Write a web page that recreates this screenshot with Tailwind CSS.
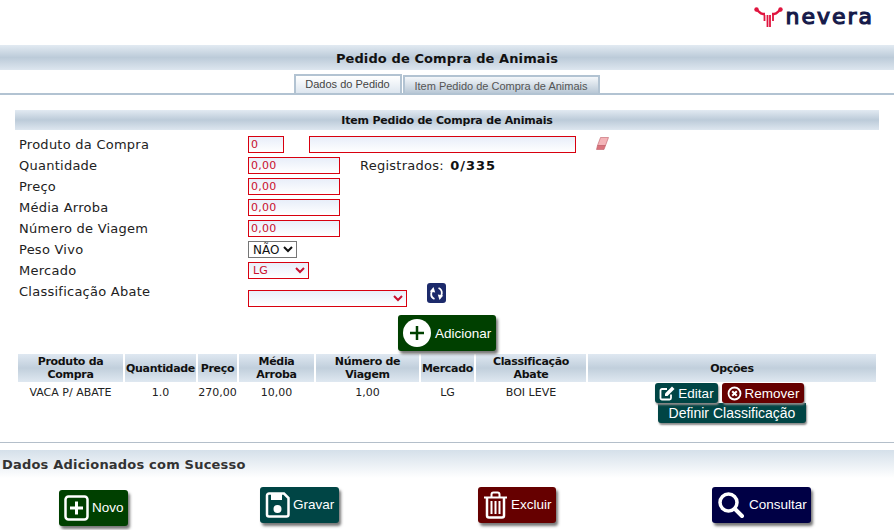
<!DOCTYPE html>
<html lang="pt-BR">
<head>
<meta charset="utf-8">
<title>Pedido de Compra de Animais</title>
<script src="https://cdn.jsdelivr.net/npm/@tailwindcss/browser@4"></script>
</head>
<body class="h-[530px] w-[894px] overflow-hidden bg-white font-['DejaVu_Sans',sans-serif] text-[#111]">

<!-- logo -->
<header class="flex h-[45px] items-start justify-end pt-[7px] pr-[20px]">
  <div class="flex items-center gap-[2px]">
    <svg width="29" height="20" viewBox="0 0 29 20" aria-hidden="true" fill="none" stroke="#e0153f">
      <path stroke-width="2.500" d="M2 3c3 0 3 4 7 4h2M27 3c-3 0-3 4-7 4h-2"/>
      <path stroke-width="1.800" d="M10.500 8v6M13.500 8v12M16 8v12M19 8v6"/>
      <circle cx="2.500" cy="2.500" r="2.200" fill="#e0153f" stroke="none"/>
      <circle cx="26.500" cy="2.500" r="2.200" fill="#e0153f" stroke="none"/>
    </svg>
    <span class="text-[22px] leading-[20px] tracking-[2px] text-[#161a4a] [-webkit-text-stroke:1.200px_#161a4a]">nevera</span>
  </div>
</header>

<!-- page title -->
<h1 class="flex h-[25px] items-center justify-center bg-linear-to-b from-[#e2eaf2] via-[#bccbd9] to-[#dde6ef] pt-[2px] text-[13px] font-bold tracking-[0.1px] text-[#111]">Pedido de Compra de Animais</h1>

<!-- tabs -->
<nav class="flex h-[25px] items-end justify-center border-b-2 border-[#b2c3d2] font-['Liberation_Sans',sans-serif] text-[11px]">
  <a class="mr-[1px] ml-[-1px] flex h-[19px] w-[108px] items-center justify-center border-x-2 border-t-2 border-[#b2c3d2] bg-linear-to-b from-white to-[#dde6ef] text-[#444]">Dados do Pedido</a>
  <a class="flex h-[18px] w-[197px] items-center justify-center border-x-2 border-t-2 border-[#b2c3d2] bg-linear-to-b from-[#f4f7fa] to-[#b9c8d6] pt-[2px] text-[#555]">Item Pedido de Compra de Animais</a>
</nav>

<main class="px-[15px] pt-[15px]">
  <h2 class="flex h-[20px] items-center justify-center bg-linear-to-b from-[#e2eaf2] via-[#bccbd9] to-[#dde6ef] pt-[2px] text-[11px] font-bold tracking-[-0.2px]">Item Pedido de Compra de Animais</h2>

  <!-- form -->
  <form class="pt-[6px] pl-[4px] text-[13px] leading-[17px] tracking-[0.25px] text-[#222]">
    <div class="flex h-[21px] items-start">
      <label class="w-[229px]">Produto da Compra</label>
      <input value="0" class="h-[17px] w-[36px] border border-[#d8000f] bg-linear-to-b from-[#e8eef9] to-white px-[2px] text-[11px] text-[#c8102e]">
      <input class="ml-[25px] h-[17px] w-[267px] border border-[#d8000f] bg-linear-to-b from-[#e8eef9] to-white">
      <svg class="mt-[1px] ml-[20px]" width="13" height="13" viewBox="0 0 13 13" aria-hidden="true">
        <path fill="#f4b4b8" stroke="#c0606a" stroke-width=".6" d="M4.500.5h8L9.500 8.500H1.500z"/>
        <path fill="#d9737c" stroke="#c0606a" stroke-width=".6" d="M1.500 8.500h8l-1.500 4H.5z"/>
      </svg>
    </div>
    <div class="flex h-[21px] items-start">
      <label class="w-[229px]">Quantidade</label>
      <input value="0,00" class="h-[17px] w-[92px] border border-[#d8000f] bg-linear-to-b from-[#e8eef9] to-white px-[2px] text-[11px] text-[#c8102e]">
      <span class="ml-[20px]">Registrados: <b class="ml-[2px] font-bold tracking-[1px] text-[#111]">0/335</b></span>
    </div>
    <div class="flex h-[21px] items-start">
      <label class="w-[229px]">Preço</label>
      <input value="0,00" class="h-[17px] w-[92px] border border-[#d8000f] bg-linear-to-b from-[#e8eef9] to-white px-[2px] text-[11px] text-[#c8102e]">
    </div>
    <div class="flex h-[21px] items-start">
      <label class="w-[229px]">Média Arroba</label>
      <input value="0,00" class="h-[17px] w-[92px] border border-[#d8000f] bg-linear-to-b from-[#e8eef9] to-white px-[2px] text-[11px] text-[#c8102e]">
    </div>
    <div class="flex h-[21px] items-start">
      <label class="w-[229px]">Número de Viagem</label>
      <input value="0,00" class="h-[17px] w-[92px] border border-[#d8000f] bg-linear-to-b from-[#e8eef9] to-white px-[2px] text-[11px] text-[#c8102e]">
    </div>
    <div class="flex h-[21px] items-start">
      <label class="w-[229px]">Peso Vivo</label>
      <select class="h-[17px] w-[49px] border border-[#767676] bg-white text-[12px] tracking-normal text-[#111]"><option>NÃO</option></select>
    </div>
    <div class="flex h-[21px] items-start">
      <label class="w-[229px]">Mercado</label>
      <select class="h-[17px] w-[61px] border border-[#d8000f] bg-linear-to-b from-[#e8eef9] to-white text-[11px] tracking-normal text-[#c8102e]"><option>LG</option></select>
    </div>
    <div class="flex h-[32px] items-start">
      <label class="w-[229px]">Classificação Abate</label>
      <select class="mt-[7px] h-[17px] w-[159px] border border-[#d8000f] bg-linear-to-b from-[#e8eef9] to-white text-[11px] text-[#c8102e]"><option></option></select>
      <span class="ml-[20px] flex h-[20px] w-[19px] items-center justify-center rounded-[3px] bg-[#1c2a6b]">
        <svg width="15" height="15" viewBox="0 0 15 15" fill="none" stroke="white" stroke-width="1.800" aria-hidden="true">
          <path d="M5.500 13C3 12 2 10 2.200 7.500 2.300 6.500 2.800 5.500 3.500 4.500"/>
          <path fill="white" stroke="none" d="M.8 5.500L4.500 1l1.700 5.500z"/>
          <path d="M9.500 2c2.500 1 3.500 3 3.300 5.500-.1 1-.6 2-1.300 3"/>
          <path fill="white" stroke="none" d="M14.200 9.500L10.500 14 8.800 8.500z"/>
        </svg>
      </span>
    </div>
    <div class="flex h-[39px] items-start pl-[379px]">
      <button type="button" class="flex h-[36px] w-[98px] items-center rounded-[3px] bg-[#004000] pl-[5px] font-['Liberation_Sans',sans-serif] text-[13.500px] tracking-normal text-white shadow-[2px_3px_3px_#777]">
        <svg width="28" height="28" viewBox="0 0 28 28" aria-hidden="true">
          <circle cx="14" cy="14" r="14" fill="white"/>
          <path stroke="#004000" stroke-width="2.500" d="M14 7v14M7 14h14"/>
        </svg>
        <span class="ml-[4px]">Adicionar</span>
      </button>
    </div>
  </form>

  <!-- items -->
  <table class="ml-[1px] w-[862px] table-fixed border-separate border-spacing-x-[2px] border-spacing-y-0 text-[11px] leading-[13px] text-[#222]">
    <colgroup>
      <col class="w-[105px]"><col class="w-[71px]"><col class="w-[39px]"><col class="w-[75px]"><col class="w-[103px]"><col class="w-[53px]"><col class="w-[110px]"><col>
    </colgroup>
    <thead>
      <tr class="h-[28px] tracking-[-0.3px] text-[#111]">
        <th class="bg-linear-to-b from-[#dfe8f1] via-[#c1cfdc] to-[#dfe8f1] font-bold">Produto da Compra</th>
        <th class="bg-linear-to-b from-[#dfe8f1] via-[#c1cfdc] to-[#dfe8f1] font-bold">Quantidade</th>
        <th class="bg-linear-to-b from-[#dfe8f1] via-[#c1cfdc] to-[#dfe8f1] font-bold">Preço</th>
        <th class="bg-linear-to-b from-[#dfe8f1] via-[#c1cfdc] to-[#dfe8f1] font-bold">Média Arroba</th>
        <th class="bg-linear-to-b from-[#dfe8f1] via-[#c1cfdc] to-[#dfe8f1] font-bold">Número de Viagem</th>
        <th class="bg-linear-to-b from-[#dfe8f1] via-[#c1cfdc] to-[#dfe8f1] font-bold">Mercado</th>
        <th class="bg-linear-to-b from-[#dfe8f1] via-[#c1cfdc] to-[#dfe8f1] font-bold">Classificação Abate</th>
        <th class="bg-linear-to-b from-[#dfe8f1] via-[#c1cfdc] to-[#dfe8f1] font-bold">Opções</th>
      </tr>
    </thead>
    <tbody>
      <tr class="text-center align-top">
        <td class="pt-[4px]">VACA P/ ABATE</td>
        <td class="pt-[4px]">1.0</td>
        <td class="pt-[4px]">270,00</td>
        <td class="pt-[4px]">10,00</td>
        <td class="pt-[4px]">1,00</td>
        <td class="pt-[4px]">LG</td>
        <td class="pt-[4px]">BOI LEVE</td>
        <td class="pt-[1px] font-['Liberation_Sans',sans-serif] text-[13.500px]">
          <div class="flex justify-center gap-[4px] pr-[5px]">
            <button type="button" class="flex h-[20px] w-[63px] items-center justify-center gap-[3px] rounded-[3px] bg-[#004545] text-white shadow-[1px_2px_2px_#888]">
              <svg width="16" height="15" viewBox="0 0 16 15" fill="none" stroke="white" stroke-width="1.800" aria-hidden="true">
                <path d="M12 8.500V12a1.500 1.500 0 0 1-1.500 1.500H3A1.500 1.500 0 0 1 1.500 12V4.500A1.500 1.500 0 0 1 3 3h5"/>
                <path fill="white" stroke="none" d="M13 .5l2.500 2.500-7 7H6V7.500z"/>
              </svg>
              <span>Editar</span>
            </button>
            <button type="button" class="flex h-[20px] w-[82px] items-center justify-center gap-[3px] rounded-[3px] bg-[#660000] text-white shadow-[1px_2px_2px_#888]">
              <svg width="15" height="15" viewBox="0 0 15 15" fill="none" stroke="white" aria-hidden="true">
                <circle cx="7.500" cy="7.500" r="6" stroke-width="1.800"/>
                <path stroke-width="2" d="M5.200 5.200l4.600 4.600M9.800 5.200l-4.600 4.600"/>
              </svg>
              <span>Remover</span>
            </button>
          </div>
          <button type="button" class="ml-[70px] block h-[20px] w-[148px] rounded-b-[3px] bg-[#004545] text-[14px] text-white shadow-[1px_2px_2px_#888]">Definir Classificação</button>
        </td>
      </tr>
    </tbody>
  </table>
</main>

<!-- footer -->
<footer class="mt-[19px] border-t border-[#b4bfca] pt-[7px]">
  <p class="flex h-[28px] items-center bg-linear-to-b from-[#d5e0ea] to-white pt-[1px] pl-[2px] text-[13px] font-bold tracking-[0.2px] text-[#333]">Dados Adicionados com Sucesso</p>
  <div class="flex items-start pt-[9px] font-['Liberation_Sans',sans-serif] text-[13.500px] text-white">
    <button type="button" class="mt-[3px] ml-[59px] flex h-[36px] w-[69px] items-center gap-[3px] rounded-[3px] bg-[#004000] pl-[5px] shadow-[2px_3px_3px_#777]">
      <svg width="25" height="26" viewBox="0 0 25 26" fill="none" stroke="white" aria-hidden="true">
        <rect x="1.500" y="1.500" width="22" height="23" rx="3" stroke-width="2.500"/>
        <path stroke-width="3" d="M12.500 6.500v13M6 13h13"/>
      </svg>
      <span>Novo</span>
    </button>
    <button type="button" class="ml-[132px] flex h-[36px] w-[79px] items-center gap-[3px] rounded-[3px] bg-[#004545] pl-[5px] shadow-[2px_3px_3px_#777]">
      <svg width="25" height="26" viewBox="0 0 25 26" aria-hidden="true">
        <path fill="none" stroke="white" stroke-width="2.500" d="M4 1.500h15l4.500 4.500v16.500a2 2 0 0 1-2 2H4a2 2 0 0 1-2-2v-19a2 2 0 0 1 2-2z"/>
        <rect x="6" y="2" width="11" height="6" fill="white"/>
        <circle cx="12.500" cy="17" r="4" fill="white"/>
      </svg>
      <span>Gravar</span>
    </button>
    <button type="button" class="ml-[139px] flex h-[36px] w-[78px] items-center gap-[3px] rounded-[3px] bg-[#660000] pl-[5px] shadow-[2px_3px_3px_#777]">
      <svg width="25" height="28" viewBox="0 0 25 28" fill="none" stroke="white" aria-hidden="true">
        <path stroke-width="2" d="M1 6.500h23M8.500 6V3.500a2 2 0 0 1 2-2h4a2 2 0 0 1 2 2V6"/>
        <path stroke-width="2.500" d="M4 7v17.500a2 2 0 0 0 2 2h13a2 2 0 0 0 2-2V7"/>
        <path stroke-width="2" d="M8.500 10v13M12.500 10v13M16.500 10v13"/>
      </svg>
      <span>Excluir</span>
    </button>
    <button type="button" class="ml-[156px] flex h-[36px] w-[99px] items-center gap-[4px] rounded-[3px] bg-[#000045] pl-[5px] shadow-[2px_3px_3px_#777]">
      <svg width="28" height="28" viewBox="0 0 28 28" fill="none" stroke="white" aria-hidden="true">
        <circle cx="11.500" cy="11.500" r="8.500" stroke-width="3.500"/>
        <path stroke-width="4" stroke-linecap="round" d="M18 18l7 7"/>
      </svg>
      <span>Consultar</span>
    </button>
  </div>
</footer>

</body>
</html>
